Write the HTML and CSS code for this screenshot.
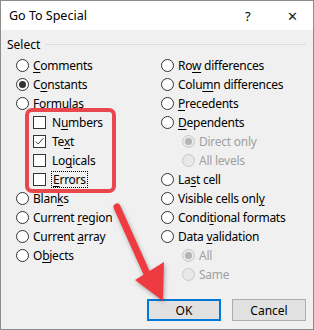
FILE: index.html
```html
<!DOCTYPE html>
<html lang="en">
<head>
    <meta charset="UTF-8">
    <title>Go To Special</title>
<link rel="stylesheet" href="styles.css">
</head>
<body>
    <div class="dialog">
        <div class="titlebar">
            <span class="title">Go To Special</span>
            <span class="help">?</span>
            <span class="close">&#x2715;</span>
        </div>
        <div class="group">
            <div class="legend"><span>Select</span></div>
            <div class="cols">
                <div class="col">
                    <div class="row"><i class="radio"></i><span><u>C</u>omments</span></div>
                    <div class="row"><i class="radio on"></i><span>C<u>o</u>nstants</span></div>
                    <div class="row"><i class="radio"></i><span><u>F</u>ormulas</span></div>
                    <div class="row sub"><i class="check"></i><span>N<u>u</u>mbers</span></div>
                    <div class="row sub"><i class="check"><svg viewBox="0 0 13 13" width="11" height="11"><path d="M2 6.5 L5 9.5 L11 2.5" fill="none" stroke="#333" stroke-width="1.1"/></svg></i><span>Te<u>x</u>t</span></div>
                    <div class="row sub"><i class="check"></i><span>Lo<u>g</u>icals</span></div>
                    <div class="row sub"><i class="check"></i><span class="focus"><u>E</u>rrors</span></div>
                    <div class="row"><i class="radio"></i><span>Blan<u>k</u>s</span></div>
                    <div class="row"><i class="radio"></i><span>Current <u>r</u>egion</span></div>
                    <div class="row"><i class="radio"></i><span>Current <u>a</u>rray</span></div>
                    <div class="row"><i class="radio"></i><span>O<u>b</u>jects</span></div>
                </div>
                <div class="col">
                    <div class="row"><i class="radio"></i><span>Ro<u>w</u> differences</span></div>
                    <div class="row"><i class="radio"></i><span>Colu<u>m</u>n differences</span></div>
                    <div class="row"><i class="radio"></i><span><u>P</u>recedents</span></div>
                    <div class="row"><i class="radio"></i><span><u>D</u>ependents</span></div>
                    <div class="row sub off"><i class="radio on"></i><span>Direct only</span></div>
                    <div class="row sub off"><i class="radio"></i><span>All levels</span></div>
                    <div class="row"><i class="radio"></i><span>La<u>s</u>t cell</span></div>
                    <div class="row"><i class="radio"></i><span>Visible cells onl<u>y</u></span></div>
                    <div class="row"><i class="radio"></i><span>Condi<u>t</u>ional formats</span></div>
                    <div class="row"><i class="radio"></i><span>Data <u>v</u>alidation</span></div>
                    <div class="row sub off"><i class="radio on"></i><span>All</span></div>
                    <div class="row sub off"><i class="radio"></i><span>Same</span></div>
                </div>
            </div>
        </div>
        <div class="buttons">
            <button class="default">OK</button>
            <button>Cancel</button>
        </div>

        <div class="callout"></div>
        <svg class="arrow" width="314" height="330" viewBox="0 0 314 330">
            <line x1="117" y1="207" x2="148" y2="276" stroke="#ee3b41" stroke-width="7" stroke-linecap="round"/>
            <polygon points="135,280 164,262 163,301" fill="#ee3b41"/>
        </svg>
    </div>
</body>
</html>
```

FILE: styles.css
```css
*{
    margin: 0;
    padding: 0;
    box-sizing: border-box;
}
body{
    font-family: "Noto Sans", "Open Sans", sans-serif;
    font-size: 12px;
    color: #000;
}
.dialog{
    position: relative;
    width: 314px;
    height: 330px;
    border: 1px solid #8c8c8c;
    background: #f0f0f0;
    display: flex;
    flex-direction: column;
}
.titlebar{
    height: 29px;
    background: #fff;
    display: flex;
    align-items: center;
    padding-left: 8px;
}
.title{
    flex: 1;
    font-size: 12.5px;
}
.help{
    width: 14px;
    margin-right: 28px;
    font-size: 13px;
}
.close{
    width: 14px;
    margin-right: 12px;
    font-size: 13px;
    color: #222;
}
.group{
    padding: 5px 7px 0 6px;
}
.legend{
    display: flex;
    align-items: center;
    height: 18px;
}
.legend:after{
    content: "";
    flex: 1;
    height: 1px;
    background: #dcdcdc;
    margin-left: 5px;
}
.cols{
    display: flex;
    padding-left: 9px;
    padding-top: 3px;
}
.col{
    width: 148px;
}
.row{
    height: 19px;
    display: flex;
    align-items: center;
    white-space: nowrap;
    letter-spacing: -0.25px;
}
.row u{
    text-decoration-thickness: 1px;
    text-underline-offset: 2px;
}
.row.sub{
    padding-left: 17px;
}
.col + .col .row.sub{
    padding-left: 21px;
}
.radio{
    width: 13px;
    height: 13px;
    border: 1px solid #333;
    border-radius: 50%;
    background: #fff;
    margin-right: 4px;
    display: flex;
    align-items: center;
    justify-content: center;
}
.radio.on:after{
    content: "";
    width: 7px;
    height: 7px;
    border-radius: 50%;
    background: #333;
}
.check{
    width: 13px;
    height: 13px;
    border: 1px solid #333;
    background: #fff;
    margin-right: 6px;
    display: flex;
    align-items: center;
    justify-content: center;
}
.off{
    color: #a0a0a0;
}
.off .radio{
    border-color: #c8c8c8;
    background: #e8e8e8;
}
.off .radio.on:after{
    background: #b4b4b4;
}
.focus{
    outline: 1px dotted #000;
    outline-offset: 0;
    padding: 0 1px;
    line-height: 15px;
}
.buttons{
    margin-top: auto;
    display: flex;
    justify-content: flex-end;
    gap: 11px;
    padding: 0 7px 8px 0;
}
.buttons button{
    width: 74px;
    height: 22px;
    font-family: inherit;
    font-size: 12px;
    background: #e1e1e1;
    border: 1px solid #adadad;
}
.buttons .default{
    border: 2px solid #0078d7;
}
.callout{
    position: absolute;
    left: 24px;
    top: 107px;
    width: 91px;
    height: 85px;
    border: 4px solid #e9474e;
    border-radius: 7px;
}
.arrow{
    position: absolute;
    left: -1px;
    top: -1px;
    filter: drop-shadow(1px 2px 2px rgba(0,0,0,0.3));
}
```
